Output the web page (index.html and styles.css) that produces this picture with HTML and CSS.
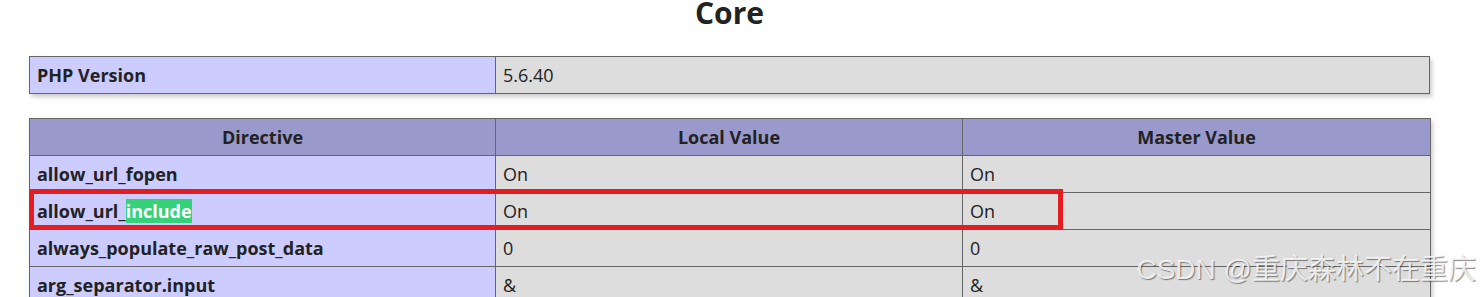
FILE: index.html
```html
<!DOCTYPE html>
<html>
<head>
<meta charset="utf-8">
<link rel="stylesheet" href="styles.css">
</head>
<body>
<div class="page">
  <h2 class="title">Core</h2>
  <table class="info">
    <colgroup><col class="c1"><col class="cv"></colgroup>
    <tr><td class="e">PHP Version</td><td class="v">5.6.40</td></tr>
  </table>
  <table class="info second">
    <colgroup><col class="c1"><col class="c2"><col class="c3"></colgroup>
    <tr class="h"><th>Directive</th><th>Local Value</th><th>Master Value</th></tr>
    <tr><td class="e">allow_url_fopen</td><td class="v">On</td><td class="v">On</td></tr>
    <tr><td class="e">allow_url_<span class="hl">include</span></td><td class="v">On</td><td class="v">On</td></tr>
    <tr><td class="e">always_populate_raw_post_data</td><td class="v">0</td><td class="v">0</td></tr>
    <tr><td class="e">arg_separator.input</td><td class="v">&amp;</td><td class="v">&amp;</td></tr>
  </table>
  <div class="mark"></div>
</div>
<div class="watermark">CSDN @重庆森林不在重庆</div>
</body>
</html>
```
FILE: styles.css
```css
html, body {
  margin: 0;
  padding: 0;
  background: #fff;
  color: #222;
  font-family: "Open Sans", "Noto Sans", sans-serif;
  overflow: hidden;
}
.page {
  position: relative;
  width: 1401px;
  margin-left: 29px;
}
.title {
  margin: 0 0 30px 0;
  font-size: 30px;
  line-height: 26px;
  font-weight: bold;
  text-align: center;
  color: #222;
}
.info {
  border-collapse: collapse;
  table-layout: fixed;
  width: 1401px;
  box-shadow: 1.5px 3px 4.5px #ccc;
}
.second {
  margin-top: 24px;
}
.c1 { width: 466px; }
.c2 { width: 467px; }
.c3 { width: 468px; }
.info td, .info th {
  border: 1px solid #666;
  font-size: 18px;
  line-height: 24px;
  padding: 6px 7px;
  vertical-align: baseline;
  text-align: left;
  white-space: nowrap;
  overflow: hidden;
}
.info .h th {
  background: #99c;
  font-weight: bold;
  text-align: center;
}
.e {
  background: #ccf;
  font-weight: bold;
}
.v {
  background: #ddd;
}
.hl {
  background: #36d279;
  color: #fff;
}
.mark {
  position: absolute;
  left: 0;
  top: 189px;
  width: 1034px;
  height: 41px;
  box-sizing: border-box;
  border: 5px solid #e41d22;
}
.watermark {
  position: absolute;
  right: 4px;
  top: 252px;
  font-family: "Liberation Sans", "Noto Sans CJK SC", sans-serif;
  font-size: 28px;
  line-height: 36px;
  color: rgba(250, 250, 250, 0.85);
  text-shadow: 1px 1px 1px rgba(0, 0, 0, 0.45);
  white-space: nowrap;
}
```
